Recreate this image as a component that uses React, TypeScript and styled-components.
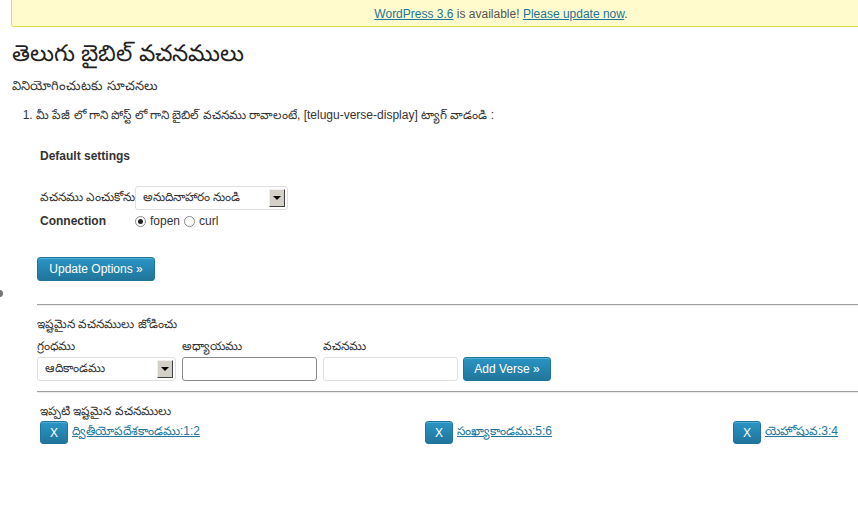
import React from "react";
import styled, { createGlobalStyle } from "styled-components";

const Global = createGlobalStyle`
  html, body { margin: 0; padding: 0; overflow: hidden; background: #fff; }
  body { font-family: "Liberation Sans", Arial, sans-serif; font-size: 12px; color: #333; }
`;

const Page = styled.div`
  position: relative;
  width: 858px;
  height: 526px;
  overflow: hidden;
`;

const Notice = styled.div`
  margin: -4px 0 0 11px;
  width: 980px;
  height: 31px;
  box-sizing: border-box;
  background: #fffbcc;
  border: 1px solid #e6db55;
  border-top: none;
  border-radius: 0 0 3px 3px;
  text-align: center;
  line-height: 14px;
  padding-top: 11px;
  color: #555;
  font-size: 12px;
`;

const Link = styled.a`
  color: #21759b;
  text-decoration: underline;
`;

const Wrap = styled.div`
  padding: 0 0 0 12px;
`;

const Title = styled.h2`
  margin: 11px 0 0;
  font-size: 23px;
  font-weight: normal;
  color: #222;
  line-height: 30px;
`;

const Sub = styled.div`
  margin-top: 9px;
  font-size: 13px;
  color: #333;
  line-height: 18px;
`;

const List = styled.ol`
  margin: 12px 0 0;
  padding-left: 24px;
  li { line-height: 16px; padding-left: 0; }
`;

const Settings = styled.div`
  padding-left: 28px;
  margin-top: 25px;
`;

const Heading = styled.div`
  font-weight: bold;
  font-size: 12px;
  line-height: 16px;
`;

const FormRow = styled.div<{ $top?: number }>`
  display: grid;
  grid-template-columns: 95px auto;
  align-items: center;
  margin-top: ${(p) => p.$top ?? 0}px;
`;

const Label = styled.span<{ $bold?: boolean }>`
  font-weight: ${(p) => (p.$bold ? "bold" : "normal")};
  white-space: nowrap;
`;

const FakeSelect = styled.div<{ $w: number }>`
  width: ${(p) => p.$w}px;
  height: 24px;
  box-sizing: border-box;
  border: 1px solid #dfdfdf;
  border-radius: 3px;
  background: #fff;
  display: flex;
  align-items: center;
  justify-content: space-between;
  padding: 0 2px 0 7px;
  white-space: nowrap;
`;

const ArrowBox = styled.span`
  width: 16px;
  height: 18px;
  box-sizing: border-box;
  background: #d4d0c8;
  border: 1px solid;
  border-color: #f0f0f0 #404040 #404040 #f0f0f0;
  display: flex;
  align-items: center;
  justify-content: center;
  &::after {
    content: "";
    border-left: 4px solid transparent;
    border-right: 4px solid transparent;
    border-top: 4px solid #000;
  }
`;

const Radios = styled.div`
  display: flex;
  align-items: center;
  gap: 4px;
`;

const Radio = styled.span<{ $on?: boolean }>`
  width: 11px;
  height: 11px;
  box-sizing: border-box;
  border-radius: 50%;
  border: 1px solid #888;
  background: #fff;
  display: inline-flex;
  align-items: center;
  justify-content: center;
  &::after {
    content: "";
    width: 5px;
    height: 5px;
    border-radius: 50%;
    background: ${(p) => (p.$on ? "#222" : "transparent")};
  }
`;

const Button = styled.button<{ $w?: number }>`
  height: 24px;
  ${(p) => (p.$w ? `width: ${p.$w}px;` : "")}
  padding: 0 10px;
  border: 1px solid #21759b;
  border-radius: 3px;
  background: linear-gradient(#2a95c5, #21759b);
  box-shadow: inset 0 1px 0 rgba(120, 200, 230, 0.5);
  color: #fff;
  font-family: "Liberation Sans", Arial, sans-serif;
  font-size: 12px;
  cursor: pointer;
  white-space: nowrap;
`;

const Hr = styled.div<{ $top: number }>`
  margin-top: ${(p) => p.$top}px;
  height: 2px;
  box-sizing: border-box;
  border-top: 1px solid #a0a0a0;
  border-bottom: 1px solid #ededed;
`;

const Section = styled.div`
  margin-left: 25px;
`;

const Caption = styled.div<{ $top: number; $left?: number }>`
  margin-top: ${(p) => p.$top}px;
  margin-left: ${(p) => p.$left ?? 0}px;
`;

const AddGrid = styled.div`
  display: grid;
  grid-template-columns: 145px 141px 140px auto;
  align-items: center;
  margin-top: 5px;
  row-gap: 1px;
  justify-items: start;
`;

const TextInput = styled.div<{ $dark?: boolean }>`
  width: 135px;
  height: 24px;
  box-sizing: border-box;
  border: 1px solid ${(p) => (p.$dark ? "#8a8a8a" : "#dfdfdf")};
  border-radius: 3px;
  background: #fff;
`;

const Verses = styled.div`
  display: grid;
  grid-template-columns: 385px 308px 1fr;
  margin-top: 0;
  margin-left: 3px;
  align-items: center;
`;

const Verse = styled.div`
  display: flex;
  align-items: center;
  gap: 4px;
`;

const XButton = styled(Button)`
  width: 28px;
  height: 23px;
  padding: 0;
`;

const Dot = styled.span`
  position: absolute;
  left: -4px;
  top: 290px;
  width: 7px;
  height: 7px;
  border-radius: 50%;
  background: #777;
`;

export default function App() {
  return (
    <Page>
      <Global />
      <Dot />
      <Notice>
        <Link>WordPress 3.6</Link> is available! <Link>Please update now</Link>.
      </Notice>
      <Wrap>
        <Title>తెలుగు బైబిల్ వచనములు</Title>
        <Sub>వినియోగించుటకు సూచనలు</Sub>
        <List>
          <li>
            మీ పేజీ లో గాని పోస్ట్ లో గాని బైబిల్ వచనము రావాలంటే, [telugu-verse-display] ట్యాగ్ వాడండి :
          </li>
        </List>
        <Settings>
          <Heading>Default settings</Heading>
          <FormRow $top={22}>
            <Label>వచనము ఎంచుకోను</Label>
            <FakeSelect $w={153}>
              <span>అనుదినాహారం నుండి</span>
              <ArrowBox />
            </FakeSelect>
          </FormRow>
          <FormRow $top={4}>
            <Label $bold>Connection</Label>
            <Radios>
              <Radio $on /> fopen <Radio /> curl
            </Radios>
          </FormRow>
        </Settings>
        <Section>
          <Caption $top={29}>
            <Button $w={118}>Update Options »</Button>
          </Caption>
          <Hr $top={23} />
          <Caption $top={11}>ఇష్టమైన వచనములు జోడించు</Caption>
          <AddGrid>
            <span>గ్రంధము</span>
            <span>అధ్యాయము</span>
            <span>వచనము</span>
            <span />
            <FakeSelect $w={139}>
              <span>ఆదికాండము</span>
              <ArrowBox />
            </FakeSelect>
            <TextInput $dark />
            <TextInput />
            <Button $w={88}>Add Verse »</Button>
          </AddGrid>
          <Hr $top={10} />
          <Caption $top={11} $left={3}>ఇప్పటి ఇష్టమైన వచనములు</Caption>
          <Verses>
            <Verse>
              <XButton>X</XButton>
              <Link>ద్వితీయోపదేశకాండము:1:2</Link>
            </Verse>
            <Verse>
              <XButton>X</XButton>
              <Link>సంఖ్యాకాండము:5:6</Link>
            </Verse>
            <Verse>
              <XButton>X</XButton>
              <Link>యెహోషువ:3:4</Link>
            </Verse>
          </Verses>
        </Section>
      </Wrap>
    </Page>
  );
}
